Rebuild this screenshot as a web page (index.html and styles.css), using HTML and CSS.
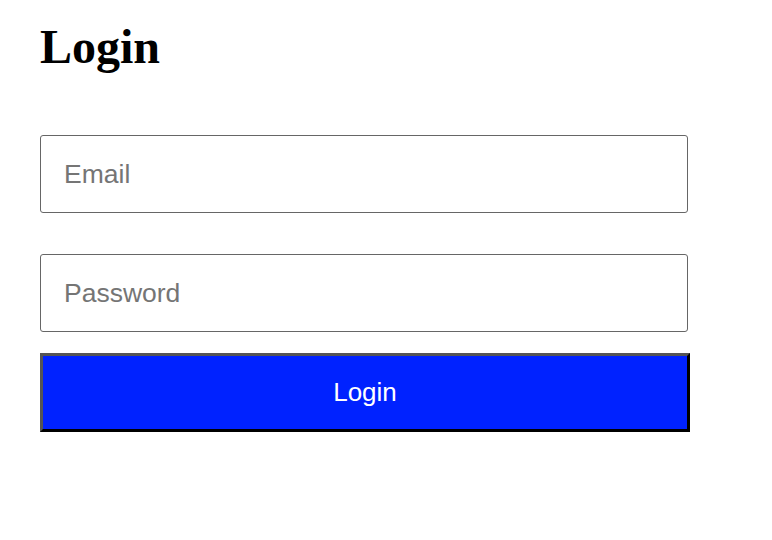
FILE: index.html
```html
<!DOCTYPE html>
<html>
<head>
<meta charset="utf-8">
<link rel="stylesheet" href="styles.css">
</head>
<body>
<div class="page">
  <h1 class="title">Login</h1>
  <form class="form">
    <input class="field field-email" type="text" placeholder="Email">
    <input class="field field-password" type="password" placeholder="Password">
    <button class="submit" type="button">Login</button>
  </form>
</div>
</body>
</html>
```
FILE: styles.css
```css
html, body {
  margin: 0;
  padding: 0;
  background: #fff;
}
.page {
  padding: 0 40px;
}
.title {
  font-family: "Liberation Serif", serif;
  font-weight: bold;
  font-size: 48px;
  line-height: 55px;
  margin: 19px 0 0 0;
  color: #000;
}
.form {
  display: flex;
  flex-direction: column;
  width: 650px;
  margin-top: 61px;
}
.field {
  box-sizing: border-box;
  width: 648px;
  height: 78px;
  border: 1px solid #666;
  border-radius: 3px;
  padding: 0 23px;
  font-family: "Liberation Sans", Arial, sans-serif;
  font-size: 26.5px;
  color: #000;
  outline: none;
  background: #fff;
}
.field::placeholder {
  color: #757575;
}
.field-email {
  margin-bottom: 41px;
}
.field-password {
  margin-bottom: 21px;
}
.submit {
  box-sizing: border-box;
  width: 650px;
  height: 79px;
  background: #0022ff;
  border-width: 3px;
  border-style: solid;
  border-color: #555 #000 #000 #555;
  color: #fff;
  font-family: "Liberation Sans", Arial, sans-serif;
  font-size: 26px;
  padding: 0;
}
```
